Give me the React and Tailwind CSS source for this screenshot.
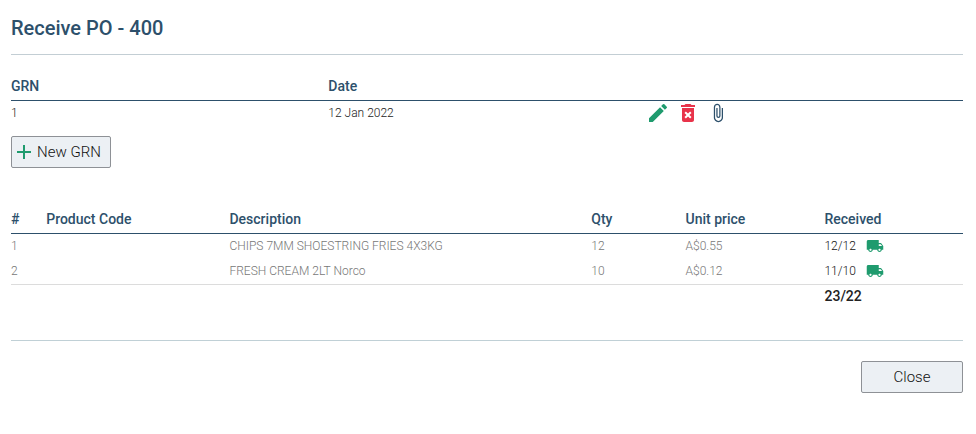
import React from 'react';
import { MdAttachFile, MdDeleteForever, MdEdit, MdLocalShipping } from 'react-icons/md';

const receipts = [{ id: 1, date: '12 Jan 2022' }];

const lines = [
  { id: 1, code: '', description: 'CHIPS 7MM SHOESTRING FRIES 4X3KG', qty: 12, price: 'A$0.55', received: 12 },
  { id: 2, code: '', description: 'FRESH CREAM 2LT Norco', qty: 10, price: 'A$0.12', received: 11 },
];

const sum = (key) => lines.reduce((total, line) => total + line[key], 0);

function PlusIcon() {
  return (
    <svg viewBox="0 0 14 14" className="size-[14px] text-[#1f9b6e]" fill="none" stroke="currentColor" strokeWidth="2" aria-hidden="true">
      <path d="M0 7h14M7 0v14" />
    </svg>
  );
}

function IconButton({ label, className, children }) {
  return (
    <button type="button" aria-label={label} className={`block cursor-pointer ${className}`}>
      {children}
    </button>
  );
}

export default function App() {
  return (
    <main className="bg-white pt-4 pr-[13px] pb-10 pl-[11px] font-['Roboto',sans-serif] text-[#333]">
      <h1 className="border-b border-[#c3ced4] pb-[14px] text-xl leading-6 font-medium text-[#2d506b]">Receive PO - 400</h1>

      <table className="mt-[18px] w-full table-fixed text-left text-xs font-light text-[#222]">
        <thead className="border-b border-[#2d506b] text-sm text-[#2d506b]">
          <tr className="h-[27px]">
            <th className="w-1/3 pb-px font-medium">GRN</th>
            <th className="w-1/3 pb-px font-medium">Date</th>
            <td className="w-1/3"></td>
          </tr>
        </thead>
        <tbody>
          {receipts.map(r => (
            <tr key={r.id} className="h-[25px]">
              <td>{r.id}</td>
              <td>{r.date}</td>
              <td>
                <div className="flex items-center gap-[6px]">
                  <IconButton label="Edit" className="text-[#1f9b6e]"><MdEdit size={24} /></IconButton>
                  <IconButton label="Delete" className="text-[#e8334a]"><MdDeleteForever size={24} /></IconButton>
                  <IconButton label="Attachments" className="pl-[2px] text-[#2d506b]"><MdAttachFile size={20} /></IconButton>
                </div>
              </td>
            </tr>
          ))}
        </tbody>
      </table>

      <button type="button" className="mt-[11px] flex h-8 cursor-pointer items-center gap-[6px] rounded-xs border border-[#8e9196] bg-[#ecf0f4] pr-[9px] pl-[5px] text-[15px] font-light text-[#111]">
        <PlusIcon />
        <span className="pt-px">New GRN</span>
      </button>

      <table className="mt-[38px] w-full table-fixed text-left text-xs font-light text-[#777]">
        <thead className="border-b border-[#2d506b] text-sm text-[#2d506b]">
          <tr className="h-[27px]">
            <th className="w-[3.7%] pb-px font-medium">#</th>
            <th className="w-[19.25%] pb-px font-medium">Product Code</th>
            <th className="w-[38%] pb-px font-medium">Description</th>
            <th className="w-[9.9%] pb-px font-medium">Qty</th>
            <th className="w-[14.6%] pb-px font-medium">Unit price</th>
            <th className="w-[14.55%] pb-px font-medium">Received</th>
          </tr>
        </thead>
        <tbody>
          {lines.map(line => (
            <tr key={line.id} className="h-[25px] last:h-[26px]">
              <td>{line.id}</td>
              <td>{line.code}</td>
              <td>{line.description}</td>
              <td>{line.qty}</td>
              <td>{line.price}</td>
              <td className="text-[#111]">
                <div className="flex items-center gap-[10px]">
                  {line.received}/{line.qty}
                  <IconButton label="Receive" className="text-[#1f9b6e]"><MdLocalShipping size={18} /></IconButton>
                </div>
              </td>
            </tr>
          ))}
        </tbody>
        <tfoot className="border-t border-[#dcdcdc] text-sm text-[#222]">
          <tr className="h-[25px]">
            <td colSpan={5}></td>
            <td className="pb-px font-medium">{sum('received')}/{sum('qty')}</td>
          </tr>
        </tfoot>
      </table>

      <div className="mt-[31px] flex justify-end border-t border-[#c0d0d6] pt-5">
        <button type="button" className="h-8 w-[102px] cursor-pointer rounded-xs border border-[#8e9196] bg-[#ecf0f4] pt-px text-[15px] font-light text-[#111]">Close</button>
      </div>
    </main>
  );
}
